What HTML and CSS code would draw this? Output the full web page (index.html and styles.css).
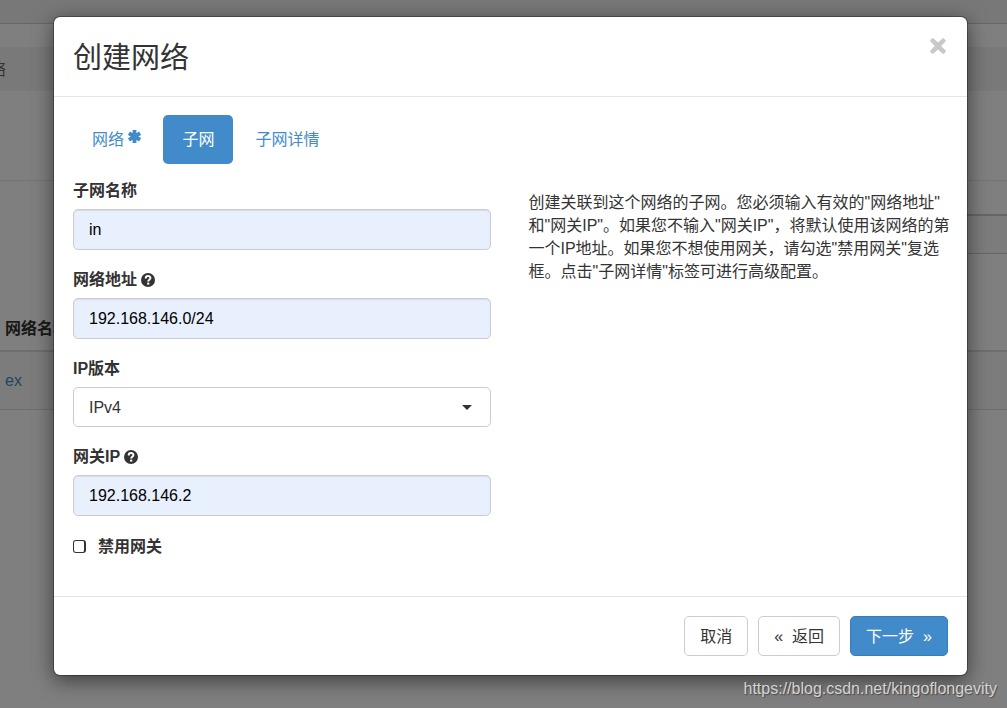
FILE: index.html
```html
<!DOCTYPE html>
<html lang="zh-CN">
<head>
<meta charset="utf-8">
<meta name="viewport" content="width=device-width, initial-scale=1">
<title>创建网络</title>
<link rel="stylesheet" href="styles.css">
</head>
<body>
<div class="page">
  <div class="topbar"></div>
  <div class="crumbs">络</div>
  <div class="page-head"></div>
  <div class="toolbar"><div class="toolbar-box"></div></div>
  <table class="networks">
    <thead><tr><th>网络名称</th></tr></thead>
    <tbody><tr><td><a href="#">ex</a></td></tr></tbody>
  </table>
</div>
<div class="backdrop">
  <form class="modal" role="dialog" aria-labelledby="title">
    <header class="modal-header">
      <h1 class="title" id="title">创建网络</h1>
      <button class="close" type="button" aria-label="关闭">
        <svg width="16" height="16" viewBox="0 0 16 16"><path d="M3 0 8 4.600 13 0Q14 0 16 3L11.200 8 16 13Q14.500 16 13 16L8 11.400 3 16Q1.500 16 0 13L4.800 8 0 3Q1.500 0 3 0Z" fill="#c8c8c8"/></svg>
      </button>
    </header>
    <div class="modal-body">
      <nav class="tabs">
        <a class="tab" href="#">网络 <svg class="star" width="13" height="13" viewBox="0 0 13 13"><g stroke="#428bca" stroke-width="3.800"><path d="M6.500 0V13M.9 3.200 12.100 9.800M12.100 3.200.9 9.800"/></g></svg></a>
        <a class="tab active" href="#">子网</a>
        <a class="tab" href="#">子网详情</a>
      </nav>
      <div class="columns">
        <div class="fields">
          <div class="group">
            <label class="label" for="name">子网名称</label>
            <input class="control filled" id="name" type="text" value="in">
          </div>
          <div class="group">
            <label class="label" for="cidr">网络地址 <svg class="help" width="14" height="14" viewBox="0 0 14 14"><circle cx="7" cy="7" r="7" fill="#333"/><path d="M4.700 5.400C4.700 2.200 9.400 2.400 9.400 5.100 9.400 6.800 7.200 6.700 7.200 8.500" fill="none" stroke="#fff" stroke-width="2"/><path d="M6.100 9.600h2.200v2H6.100z" fill="#fff"/></svg></label>
            <input class="control filled" id="cidr" type="text" value="192.168.146.0/24">
          </div>
          <div class="group">
            <label class="label" for="version">IP版本</label>
            <div class="select-wrap">
              <select class="control" id="version"><option>IPv4</option><option>IPv6</option></select>
              <svg class="caret" width="10" height="5" viewBox="0 0 10 5"><path d="M0 0h10L5 5z" fill="#333"/></svg>
            </div>
          </div>
          <div class="group">
            <label class="label" for="gateway">网关IP <svg class="help" width="14" height="14" viewBox="0 0 14 14"><circle cx="7" cy="7" r="7" fill="#333"/><path d="M4.700 5.400C4.700 2.200 9.400 2.400 9.400 5.100 9.400 6.800 7.200 6.700 7.200 8.500" fill="none" stroke="#fff" stroke-width="2"/><path d="M6.100 9.600h2.200v2H6.100z" fill="#fff"/></svg></label>
            <input class="control filled" id="gateway" type="text" value="192.168.146.2">
          </div>
          <label class="check"><input class="box" type="checkbox">禁用网关</label>
        </div>
        <p class="hint">创建关联到这个网络的子网。您必须输入有效的"网络地址"<wbr>和"网关IP"。如果您不输入"网关IP"，将默认使用该网络的第一个IP地址。如果您不想使用网关，请勾选"禁用网关"<wbr>复选框。点击"子网详情"<wbr>标签可进行高级配置。</p>
      </div>
    </div>
    <footer class="modal-footer">
      <button class="btn" type="button">取消</button>
      <button class="btn" type="button"><span>«</span><span>返回</span></button>
      <button class="btn primary" type="button"><span>下一步</span><span>»</span></button>
    </footer>
  </form>
  <div class="watermark">https://blog.csdn.net/kingoflongevity</div>
</div>
</body>
</html>
```
FILE: styles.css
```css
* { box-sizing: border-box; }
body {
  margin: 0;
  background: #fff;
  color: #333;
  font: 16px/23px "Liberation Sans", "Noto Sans CJK SC", sans-serif;
}
a { color: #428bca; text-decoration: none; }
button, input, select { font: inherit; color: inherit; }

.page { min-height: 100vh; overflow: hidden; }
.topbar { height: 24px; background: #f0f0f0; border-bottom: 1px solid #ccc; }
.crumbs {
  display: flex;
  align-items: center;
  height: 44px;
  margin-top: 23px;
  background: #f3f3f3;
  color: #666;
  text-indent: -10px;
}
.page-head { height: 90px; border-bottom: 1px solid #e7e7e7; }
.toolbar { display: flex; justify-content: flex-end; height: 124px; padding-top: 33px; }
.toolbar-box {
  width: 50%;
  height: 40px;
  background: #f9f9f9;
  border-top: 2px solid #ccc;
  border-bottom: 1px solid #ccc;
}
.networks { width: 100%; border-collapse: collapse; text-align: left; }
.networks th { height: 46px; padding: 2px 5px 0; border-bottom: 2px solid #ddd; }
.networks td { height: 58px; padding: 0 5px; background: #f9f9f9; border-bottom: 1px solid #ddd; }

.backdrop {
  position: absolute;
  inset: 0;
  min-height: 100%;
  padding: 16px 39px 0 53px;
  background: rgba(0, 0, 0, 0.5);
}
.modal {
  border: 1px solid rgba(0, 0, 0, 0.3);
  border-radius: 7px;
  background: #fff;
  background-clip: padding-box;
  box-shadow: 0 5px 20px rgba(0, 0, 0, 0.5);
}
.modal-header {
  display: flex;
  justify-content: space-between;
  align-items: flex-start;
  height: 80px;
  padding: 20px 21px 0 19px;
  border-bottom: 1px solid #e5e5e5;
}
.title { margin: 0; font-size: 29px; line-height: 42px; font-weight: 400; }
.close { display: flex; padding: 1px 0; border: 0; background: none; }

.modal-body { padding: 18px 21px 38px 19px; }
.tabs { display: flex; gap: 3px; }
.tab { padding: 13px 19px; border-radius: 5px; }
.tab.active { background: #428bca; color: #fff; }
.star { vertical-align: 2px; }

.columns { display: grid; grid-template-columns: 1fr 1fr; gap: 38px; padding-top: 15px; }
.fields { display: flex; flex-direction: column; gap: 18px; }
.group { display: flex; flex-direction: column; gap: 6px; }
.label { line-height: 24px; font-weight: 700; }
.help { vertical-align: -2px; }
.control {
  width: 100%;
  height: 40px;
  padding: 0 15px;
  border: 1px solid #ccc;
  border-radius: 5px;
  background: #fff;
  appearance: none;
}
.control.filled {
  height: 41px;
  background: #e8f0fe;
  color: #000;
  box-shadow: inset 0 1px 1px rgba(0, 0, 0, 0.08);
}
.select-wrap { display: grid; align-items: center; }
.select-wrap > * { grid-area: 1 / 1; }
.caret { justify-self: end; margin-right: 19px; pointer-events: none; }
.check { display: flex; align-items: center; gap: 12px; height: 24px; font-weight: 700; }
.box {
  width: 13px;
  height: 13px;
  margin: 0;
  border: 1px solid #333;
  border-right-width: 2px;
  border-radius: 3px;
  background: #fff;
  appearance: none;
}
.hint { margin: 12px -6px 0 0; }

.modal-footer {
  display: flex;
  justify-content: flex-end;
  gap: 10px;
  padding: 19px;
  border-top: 1px solid #e5e5e5;
}
.btn {
  display: flex;
  align-items: center;
  gap: 9px;
  height: 40px;
  padding: 0 15px;
  border: 1px solid #ccc;
  border-radius: 5px;
  background: #fff;
}
.btn.primary { background: #428bca; border-color: #357ebd; color: #fff; }

.watermark {
  position: absolute;
  right: 10px;
  bottom: 8px;
  color: #d4d4d4;
  text-shadow: 1px 1px 1px rgba(0, 0, 0, 0.4);
}
```
